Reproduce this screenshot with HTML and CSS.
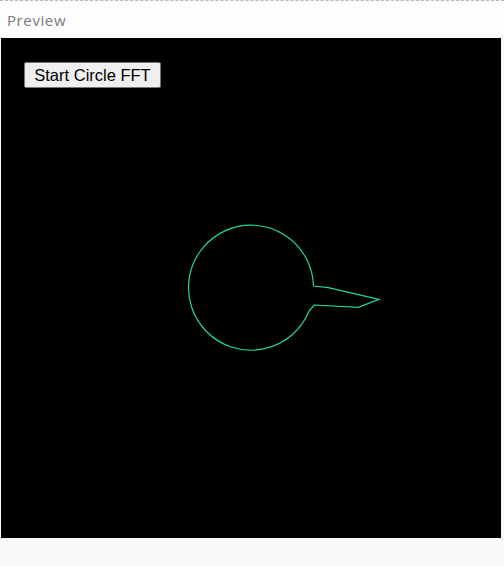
FILE: index.html
```html
<!DOCTYPE html>
<html>
<head>
<meta charset="utf-8">
<link rel="stylesheet" href="styles.css">
</head>
<body>
<div class="panel">
  <div class="header">Preview</div>
  <div class="stage">
    <svg class="canvas" width="500" height="500" viewBox="0 0 500 500">
      <path class="shape" d="M312.47 248 L327.3 249.7 L378 261.3 L357.3 269.3 L313.3 267 Q311 269.5 307.7 273.7 A62.5 62.5 0 1 1 312.47 248 Z"/>
    </svg>
    <button class="start">Start Circle FFT</button>
  </div>
</div>
</body>
</html>
```
FILE: styles.css
```css
html, body {
  margin: 0;
  padding: 0;
  background: #fafafa;
}
.panel {
  width: 504px;
  height: 566px;
  border-top: 1px dashed #b5b5b5;
  box-sizing: border-box;
  background: #fafafa;
}
.header {
  height: 37px;
  box-sizing: border-box;
  padding: 9px 0 0 7px;
  font-family: "Open Sans", "DejaVu Sans", sans-serif;
  font-size: 15px;
  color: #7a7a7a;
  background: #fdfdfd;
  letter-spacing: 0.6px;
}
.stage {
  position: relative;
  margin-left: 1px;
  width: 500px;
  height: 500px;
  background: #000;
}
.canvas {
  display: block;
}
.shape {
  fill: none;
  stroke: #20d6a6;
  stroke-width: 1.2;
  stroke-linejoin: miter;
}
.start {
  position: absolute;
  left: 23px;
  top: 24px;
  height: 26px;
  width: 137px;
  padding: 0;
  font-family: "Liberation Sans", Arial, sans-serif;
  font-size: 16.5px;
  color: #000;
  background: #efefef;
  border: 1px solid #767676;
  border-radius: 2px;
}
```
